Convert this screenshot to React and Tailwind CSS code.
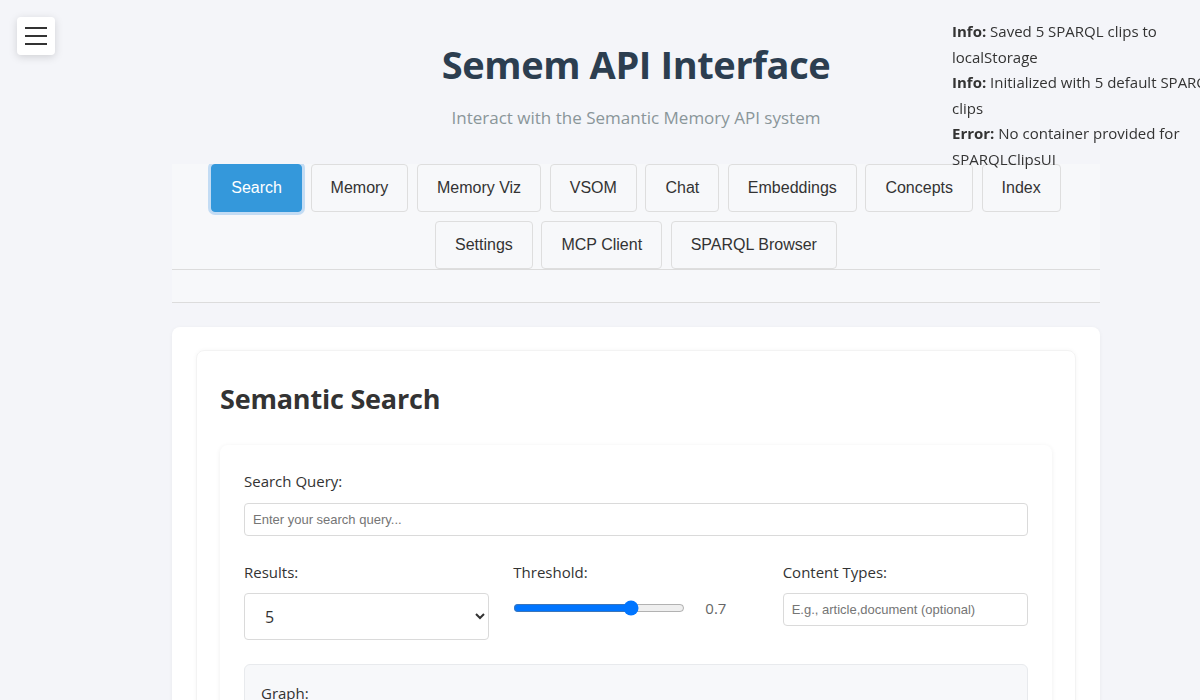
import React from "react";

const U = { fontFamily: '"Open Sans", "Noto Sans", sans-serif' };
const A = { fontFamily: '"Liberation Sans", Arial, sans-serif' };

const row1 = ["Search", "Memory", "Memory Viz", "VSOM", "Chat", "Embeddings", "Concepts", "Index"];
const row2 = ["Settings", "MCP Client", "SPARQL Browser"];

function Tab({ label }) {
  const active = label === "Search";
  return (
    <button
      style={A}
      className={
        "h-[48px] px-[19px] rounded-[4px] text-[16px] leading-[18px] border " +
        (active
          ? "bg-[#3498db] border-[#3498db] text-white shadow-[0_0_0_3px_#c3dcf4]"
          : "bg-[#f7f8fa] border-[#dedede] text-[#333]")
      }
    >
      {label}
    </button>
  );
}

export default function App() {
  return (
    <div style={U} className="min-h-screen bg-[#f4f5f9] text-[#333] relative">
      <button className="fixed left-[17px] top-[17px] w-[38px] h-[38px] bg-white rounded-[4px] shadow-[0_2px_8px_rgba(0,0,0,0.15)] flex flex-col items-center justify-center gap-[6px] z-20">
        <span className="block w-[22px] h-[2px] bg-[#333]" />
        <span className="block w-[22px] h-[2px] bg-[#333]" />
        <span className="block w-[22px] h-[2px] bg-[#333]" />
      </button>

      <div className="fixed left-[952px] top-[19px] text-[15px] leading-[25.5px] text-[#333] whitespace-nowrap z-10">
        <div><b className="font-bold">Info:</b> Saved 5 SPARQL clips to<br />localStorage</div>
        <div><b className="font-bold">Info:</b> Initialized with 5 default SPARQL<br />clips</div>
        <div><b className="font-bold">Error:</b> No container provided for<br />SPARQLClipsUI</div>
      </div>

      <div className="ml-[172px] w-[928px] pb-10">
        <header className="pt-[37px] text-center">
          <h1 className="text-[38px] leading-[54px] font-bold text-[#2c3e50] tracking-[-0.4px]">Semem API Interface</h1>
          <p className="mt-[17px] text-[17px] leading-[20px] text-[#8a9699]">Interact with the Semantic Memory API system</p>
        </header>

        <nav className="mt-[36px] bg-[#f7f8fa] overflow-hidden">
          <div className="flex flex-col gap-y-[9px] pb-[4px] -mb-[4px]">
            <div className="flex justify-center gap-x-[8.6px]">
              {row1.map((t) => <Tab key={t} label={t} />)}
            </div>
            <div className="flex justify-center gap-x-[8.6px]">
              {row2.map((t) => <Tab key={t} label={t} />)}
            </div>
          </div>
          <div className="relative border-t border-[#dcdcdc] h-[34px] border-b" />
        </nav>

        <main className="mt-[24px] bg-white rounded-[8px] shadow-[0_1px_4px_rgba(0,0,0,0.05)] px-[24px] pt-[23px]">
          <section className="rounded-[8px] shadow-[0_0_4px_rgba(0,0,0,0.04)] border border-[#f3f3f3] px-[23px] pt-[30px] pb-10">
            <h2 className="text-[27px] leading-[36px] font-bold text-[#333] tracking-[-0.2px]">Semantic Search</h2>
            <div className="mt-[28px] rounded-[8px] shadow-[0_1px_5px_rgba(0,0,0,0.07)] px-[24px] pt-[24px] pb-10">
              <label className="block text-[15px] leading-[24px]">Search Query:</label>
              <input
                style={A}
                placeholder="Enter your search query..."
                className="mt-[10px] w-full h-[33px] border border-[#dadada] rounded-[4px] px-[8px] text-[13px] placeholder:text-[#757575] outline-none"
              />
              <div className="mt-[24px] grid grid-cols-3 gap-x-[24px]">
                <div>
                  <label className="block text-[15px] leading-[24px]">Results:</label>
                  <select style={U} defaultValue="5" className="mt-[9px] w-full h-[47px] border border-[#dadada] rounded-[4px] pl-[16px] pr-[8px] text-[16px] bg-white text-[#333]">
                    <option>5</option>
                    <option>10</option>
                    <option>20</option>
                  </select>
                </div>
                <div>
                  <label className="block text-[15px] leading-[24px]">Threshold:</label>
                  <div className="mt-[9px] flex items-center h-[30px]">
                    <input type="range" min="0" max="1" step="0.1" defaultValue="0.7" className="w-[172px] accent-[#0075ff]" />
                    <span className="ml-[20px] text-[15px] text-[#666]">0.7</span>
                  </div>
                </div>
                <div>
                  <label className="block text-[15px] leading-[24px]">Content Types:</label>
                  <input
                    style={A}
                    placeholder="E.g., article,document (optional)"
                    className="mt-[9px] w-full h-[33px] border border-[#dadada] rounded-[4px] px-[8px] text-[13px] placeholder:text-[#757575] outline-none"
                  />
                </div>
              </div>
              <div className="mt-[24px] bg-[#f7f8fa] border border-[#e8eaed] rounded-[6px] px-[16px] pt-[16px] h-[120px]">
                <label className="block text-[15px] leading-[24px]">Graph:</label>
              </div>
            </div>
          </section>
        </main>
      </div>
    </div>
  );
}
